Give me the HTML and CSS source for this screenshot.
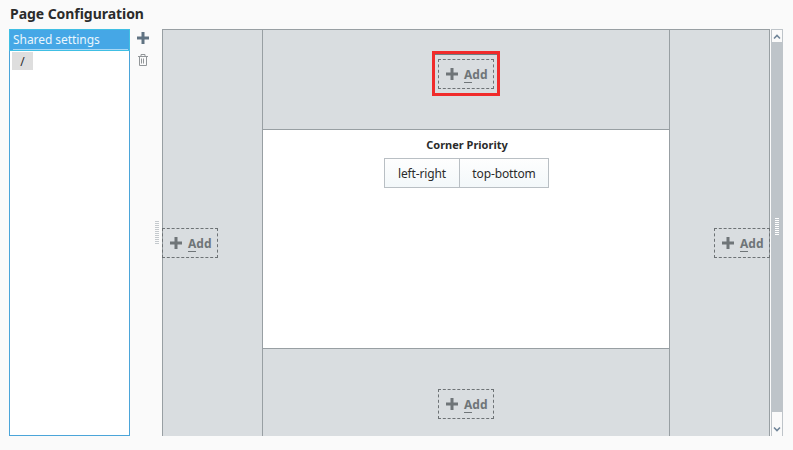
FILE: index.html
```
<!DOCTYPE html>
<html lang="en">
<head>
<meta charset="utf-8">
<title>Page Configuration</title>
<link rel="stylesheet" href="styles.css">
</head>
<body>
<h1>Page Configuration</h1>
<main>
  <div class="list">
    <div class="item selected"><span>Shared settings</span></div>
    <div class="item page">/</div>
  </div>
  <div class="tools">
    <svg class="tool" width="12" height="12" viewBox="0 0 12 12"><path d="M4.5 0h3v4.5H12v3H7.5V12h-3V7.5H0v-3h4.5z" fill="#607382"/></svg>
    <svg class="tool" width="10" height="12" viewBox="0 0 10 12" fill="none" stroke="#929699"><path d="M0 2.5h10M3 2V.5h4V2M1.5 3v8.5h7V3M3.5 4.5v5M5.5 4.5v5"/></svg>
  </div>
  <div class="grip"></div>
  <div class="layout">
    <div class="dock left"><button class="add"><svg width="12" height="12"><path d="M4.5 0h3v4.5H12v3H7.5V12h-3V7.5H0v-3h4.5z"/></svg><span><i>A</i>dd</span></button></div>
    <div class="center">
      <div class="dock top"><div class="highlight"><button class="add"><svg width="12" height="12"><path d="M4.5 0h3v4.5H12v3H7.5V12h-3V7.5H0v-3h4.5z"/></svg><span><i>A</i>dd</span></button></div></div>
      <section>
        <h2>Corner Priority</h2>
        <div class="segments"><button>left-right</button><button>top-bottom</button></div>
      </section>
      <div class="dock bottom"><button class="add"><svg width="12" height="12"><path d="M4.5 0h3v4.5H12v3H7.5V12h-3V7.5H0v-3h4.5z"/></svg><span><i>A</i>dd</span></button></div>
    </div>
    <div class="dock right"><button class="add"><svg width="12" height="12"><path d="M4.5 0h3v4.5H12v3H7.5V12h-3V7.5H0v-3h4.5z"/></svg><span><i>A</i>dd</span></button></div>
  </div>
  <div class="scroll">
    <div class="arrow up"><svg width="8" height="6" viewBox="0 0 8 6"><path d="M1 4.5l3-3 3 3" fill="none" stroke="#708599" stroke-width="1.6"/></svg></div>
    <div class="thumb"><div class="ridges"></div></div>
    <div class="arrow down"><svg width="8" height="6" viewBox="0 0 8 6"><path d="M1 1.5l3 3 3-3" fill="none" stroke="#708599" stroke-width="1.6"/></svg></div>
  </div>
</main>
</body>
</html>
```
FILE: styles.css
```
* { box-sizing: border-box; }
body {
  margin: 0;
  height: 450px;
  padding: 0 10px 0 9px;
  overflow: hidden;
  background: #fafafa;
  color: #2b2b2b;
  font: 12px/16px "Noto Sans", sans-serif;
}
h1 { margin: 0; height: 29px; padding: 4px 0 0 1px; font-size: 14px; line-height: 20px; font-weight: 700; letter-spacing: -0.05px; }
main { display: flex; height: 407px; }
button { font: inherit; color: inherit; margin: 0; }

.list { width: 121px; border: 1px solid #4ba5d9; background: #fff; }
.item.selected {
  height: 22px;
  margin: -1px -1px 0;
  padding: 0 1px 0 3px;
  border: 1px solid #40bfe4;
  background: #45a7e6;
  color: #eaf6fd;
  letter-spacing: -0.06px;
}
.item.selected span { display: block; height: 20px; line-height: 20px; border-bottom: 1px solid #a9d8f5; }
.item.page { width: 21px; height: 18px; margin: 1px 0 0 2px; background: #dedede; text-align: center; line-height: 19px; }

.tools { display: flex; flex-direction: column; align-items: center; gap: 10px; width: 26px; padding-top: 3px; }
.tool { display: block; }

.grip {
  width: 4px;
  height: 24px;
  margin: 192px 3px 0 -1px;
  background: repeating-linear-gradient(#c4c9cd 0 1px, transparent 1px 2px);
}

.layout {
  display: grid;
  grid-template-columns: 99px 408px 99px;
  width: 608px;
  border: 1px solid #989fa3;
  border-bottom: 0;
  background: #d9dde0;
}
.dock { display: flex; justify-content: center; align-items: flex-start; }
.left { justify-content: flex-start; padding-top: 198px; }
.left .add { margin-left: -1px; }
.right { justify-content: flex-end; padding-top: 198px; }
.right .add { margin-right: -1px; }
.center {
  display: grid;
  grid-template-rows: 99px 220px 1fr;
  border: solid #989fa3;
  border-width: 0 1px;
}
.top { padding-top: 21px; }
.bottom { padding-top: 40px; }

.add {
  display: flex;
  align-items: center;
  gap: 6px;
  width: 56px;
  height: 30px;
  padding: 0 0 0 7px;
  border: 1px dashed #6d7275;
  background: none;
  color: #6f7578;
  font-weight: 700;
}
.add svg { display: block; fill: #6f7578; }
.add span { height: 16px; padding-top: 1px; }
.add i { display: inline-block; height: 16px; border-bottom: 1px solid #6f7578; font-style: normal; }
.highlight {
  width: 68px;
  height: 45px;
  padding: 5px 3px;
  border: 3px solid #f02b2b;
  box-shadow: inset 0 1px #6f7b80;
}

section {
  display: flex;
  flex-direction: column;
  align-items: center;
  border: solid #989fa3;
  border-width: 1px 0;
  background: #fff;
}
h2 { margin: 7px 0 5px; padding-left: 2px; font-size: 11px; line-height: 16px; font-weight: 700; }
.segments { display: flex; }
.segments button {
  width: 76px;
  height: 30px;
  padding: 2px 0 0 1px;
  border: 1px solid #b9bfc4;
  background: linear-gradient(#fefefe, #f3f8fa);
  letter-spacing: -0.12px;
}
.segments button + button { width: 90px; margin-left: -1px; }

.scroll { display: flex; flex-direction: column; width: 12px; margin-left: 1px; background: #bec4c9; }
.arrow { display: flex; justify-content: center; height: 12px; margin: 1px 1px 0; background: #fafafa; }
.up { padding-top: 4px; }
.thumb { display: flex; flex: 1; justify-content: center; align-items: center; }
.ridges { width: 4px; height: 18px; background: repeating-linear-gradient(#fff 0 1px, transparent 1px 2px); }
.down { height: 24px; margin-top: 0; padding-top: 14px; }
```
